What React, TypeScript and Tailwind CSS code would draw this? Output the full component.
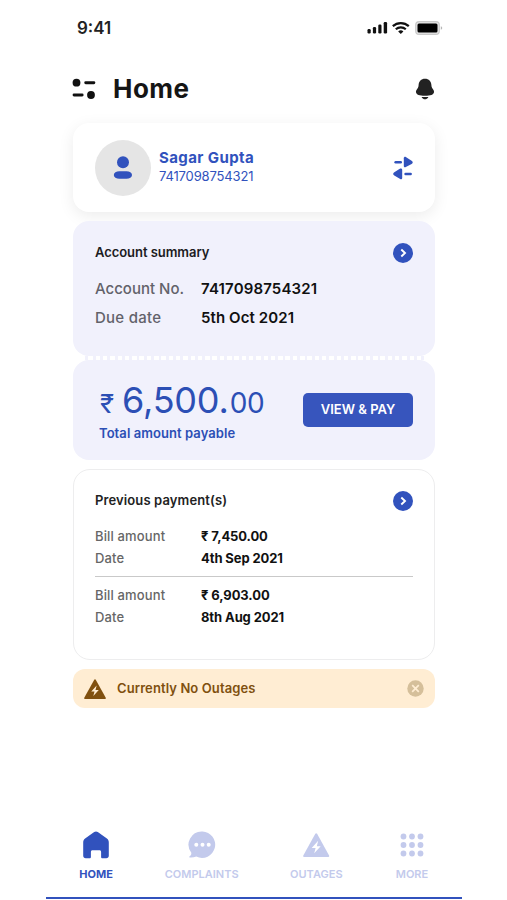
import type { ReactNode } from "react";

const NAV_COLOR = "#c3caec";

/* ---------- icons ---------- */

function StatusIcons() {
  return (
    <svg width="76" height="14" viewBox="0 0 76 14">
      {/* signal */}
      <rect x="0.5" y="8" width="3.2" height="4.4" rx="1.2" fill="#111" />
      <rect x="5.9" y="6" width="3.2" height="6.4" rx="1.2" fill="#111" />
      <rect x="11.3" y="3.5" width="3.2" height="8.9" rx="1.2" fill="#111" />
      <rect x="16.7" y="1" width="3.4" height="11.4" rx="1.2" fill="#111" />
      {/* wifi */}
      <g fill="none" stroke="#111" strokeWidth="2.2">
        <path d="M25.8 5.1a12 12 0 0 1 16 0" />
        <path d="M28.8 8.3a7.5 7.5 0 0 1 10 0" />
      </g>
      <path d="M31.2 10.4a4 4 0 0 1 5.2 0L33.8 13z" fill="#111" />
      {/* battery */}
      <rect x="48.7" y="0.7" width="23.6" height="12.6" rx="3.4" fill="#e4e4e4" stroke="#c9c9c9" strokeWidth="1.2" />
      <rect x="50.5" y="2.6" width="20" height="8.8" rx="1.5" fill="#000" />
      <path d="M73.8 5.2v3.6c.9-.3 1.4-1 1.4-1.8s-.5-1.5-1.4-1.8z" fill="#b5b5b5" />
    </svg>
  );
}

function MenuIcon() {
  return (
    <svg width="24" height="22" viewBox="0 0 24 22" fill="#111">
      <circle cx="4.5" cy="4.7" r="3.9" />
      <rect x="12.3" y="3.2" width="11" height="3" rx="1.4" />
      <rect x="0.6" y="15.5" width="11" height="3" rx="1.4" />
      <circle cx="19" cy="17" r="3.9" />
    </svg>
  );
}

function BellIcon() {
  return (
    <svg width="20" height="22" viewBox="0 0 20 22" fill="#222">
      <path d="M10 .8c-3.9 0-6.2 2.7-6.4 6.2-.1 1.7-.4 2.5-1.3 3.8C1.4 12.1.8 13 1 14.2c.3 2.4 3.4 3.5 9 3.5s8.7-1.1 9-3.5c.2-1.2-.4-2.1-1.300-3.4-.9-1.3-1.2-2.1-1.3-3.8C16.2 3.5 13.9.8 10 .8z" />
      <path d="M7.2 18.9h5.6c.5 0 .6.5.3.9-.7.9-1.7 1.5-3.1 1.5s-2.4-.6-3.1-1.5c-.3-.4-.2-.9.3-.9z" />
    </svg>
  );
}

function UserIcon() {
  return (
    <svg width="20" height="24" viewBox="0 0 20 24" fill="#3152bd">
      <circle cx="10" cy="6.2" r="6" />
      <rect x="0.8" y="15.2" width="18.2" height="7.6" rx="5.5" ry="3.8" />
    </svg>
  );
}

function SwitchIcon() {
  return (
    <svg width="22" height="24" viewBox="0 0 22 24" fill="#3152bd">
      <rect x="2.4" y="5" width="7.6" height="2.5" rx="1.2" />
      <path d="M11.8 2.2c0-1.2 1-1.800 2-1.300l5.800 3.800c1.500 1 1.500 2.300 0 3.200L13.800 11c-1 .5-2 0-2-1.100z" />
      <path d="M10.200 13.900c0-1.200-1-1.800-2-1.300l-5.900 3.600c-1.500 1-1.500 2.300 0 3.200l5.900 3.600c1 .5 2 0 2-1.100z" />
      <rect x="12.300" y="16.700" width="7.600" height="2.5" rx="1.2" />
    </svg>
  );
}

function ArrowBadge() {
  return (
    <svg className="-mt-px shrink-0" width="20" height="20" viewBox="0 0 20 20">
      <circle cx="10" cy="10" r="10" fill="#3152bd" />
      <path d="M8.3 6.5 12 10l-3.7 3.5" fill="none" stroke="#fff" strokeWidth="1.9" />
    </svg>
  );
}

function OutageIcon({ size, fill, bolt }: { size: number; fill: string; bolt: string }) {
  return (
    <svg width={size * 1.1} height={size} viewBox="0 0 26.4 24">
      <path
        d="M12.3.8Q13.2-.4 14.1.8L26.1 22.6Q26.5 23.8 25.4 24H1Q-.1 23.8.3 22.6z"
        fill={fill}
      />
      <path d="M15.2 7.7 8.7 15h3.9l-1.4 5.3 6.500-7h-3.9z" fill={bolt} />
    </svg>
  );
}

function HomeIcon() {
  return (
    <svg width="26" height="28" viewBox="0 0 26 28" fill="#3152bd">
      <path d="M11.2 1.1c1.1-.8 2.500-.8 3.600 0l9.100 6.500c1.300 1 1.900 2.200 1.900 3.800v13.400c0 1.600-1 2.500-2.500 2.500h-3.800c-.9 0-1.400-.5-1.400-1.400v-4.700c0-1.300-.6-1.900-1.800-1.900H9.700c-1.200 0-1.800.6-1.800 1.900v4.700c0 .9-.5 1.400-1.400 1.400H2.700c-1.500 0-2.500-.9-2.500-2.500V11.400c0-1.600.6-2.800 1.900-3.800z" />
    </svg>
  );
}

function ChatIcon() {
  return (
    <svg width="28" height="28" viewBox="0 0 28 28">
      <path
        d="M14.5.5a13.2 13.2 0 1 1-6.200 25.1c-2.100.8-4.300 1.100-6.400.9-.7-.1-.8-.8-.3-1.2 1.300-.9 1.900-2.100 1.700-3.600A13.200 13.200 0 0 1 14.5.5z"
        fill={NAV_COLOR}
      />
      <g fill="#fff">
        <circle cx="8.3" cy="13.7" r="2" />
        <circle cx="14.5" cy="13.7" r="2" />
        <circle cx="20.7" cy="13.7" r="2" />
      </g>
    </svg>
  );
}

function GridIcon() {
  return (
    <svg width="24" height="24" viewBox="0 0 24 24" fill={NAV_COLOR}>
      {[3.5, 12, 20.5].map((cy) =>
        [3.5, 12, 20.5].map((cx) => <circle key={`${cx}-${cy}`} cx={cx} cy={cy} r="2.9" />)
      )}
    </svg>
  );
}

/* ---------- building blocks ---------- */

function PaymentRow({ label, value }: { label: string; value: string }) {
  return (
    <div className="flex h-[22px] items-center text-[13px]">
      <span className="w-[106px] font-medium tracking-[0.15px] text-[#666]">{label}</span>
      <span className="font-bold tracking-[-0.1px] text-[#111]">{value}</span>
    </div>
  );
}

function NavItem({ icon, label, className }: { icon: ReactNode; label: string; className: string }) {
  return (
    <button className={`flex flex-col items-center ${className}`}>
      <span className="flex h-7 items-center">{icon}</span>
      <span className="mt-[7px] text-[11px] leading-4 whitespace-nowrap">{label}</span>
    </button>
  );
}

export default function App() {
  return (
    <div className="h-[900px] w-[507px] overflow-hidden bg-white font-['Inter','Noto_Sans',sans-serif]">
      <div className="ml-[46px] flex h-[899px] w-[416px] flex-col border-b-2 border-[#3152bd]">
        {/* Status bar */}
        <div className="flex h-14 items-center justify-between pr-[19px] pl-[31px]">
          <span className="pt-px text-[17px] font-semibold text-[#222]">9:41</span>
          <StatusIcons />
        </div>

        {/* Title */}
        <header className="flex h-[67px] items-center pr-[27px] pb-px pl-[26px]">
          <MenuIcon />
          <h1 className="-mt-px ml-[17px] text-[26px] font-bold tracking-[0.5px] text-[#151515]">Home</h1>
          <div className="ml-auto">
            <BellIcon />
          </div>
        </header>

        <main className="flex flex-col px-[27px]">
          {/* Profile */}
          <section className="flex h-[89px] items-center rounded-2xl bg-white px-[22px] shadow-[0_4px_16px_rgba(0,0,0,0.08)]">
            <div className="flex size-14 items-center justify-center rounded-full bg-[#e5e5e5]">
              <UserIcon />
            </div>
            <div className="ml-2 pb-0.5 text-[#3152bd]">
              <p className="text-[15px] leading-[19px] font-bold tracking-[0.4px]">Sagar Gupta</p>
              <p className="text-[13px] leading-[18px] tracking-[-0.15px]">7417098754321</p>
            </div>
            <div className="ml-auto -mr-px">
              <SwitchIcon />
            </div>
          </section>

          {/* Account summary */}
          <section className="mt-[9px] h-[135px] rounded-2xl bg-[#f1f1fc] px-[22px] pt-[22px]">
            <div className="flex h-5 items-center justify-between">
              <h2 className="text-[13px] font-semibold tracking-[-0.05px] text-[#1c1c22]">Account summary</h2>
              <ArrowBadge />
            </div>
            <div className="mt-3 flex h-[29px] items-center text-[15px]">
              <span className="w-[106px] font-medium text-[#62626a]">Account No.</span>
              <span className="font-semibold tracking-[0.15px] text-[#111]">7417098754321</span>
            </div>
            <div className="flex h-[29px] items-center text-[15px]">
              <span className="w-[106px] font-medium tracking-[0.25px] text-[#62626a]">Due date</span>
              <span className="font-semibold tracking-[0.1px] text-[#111]">5th Oct 2021</span>
            </div>
          </section>

          {/* Perforated edge */}
          <div className="mx-2 h-1 bg-[repeating-linear-gradient(90deg,#fff_0_4.5px,#f1f1fc_4.5px_7.3px)]" />

          {/* Amount payable */}
          <section className="flex h-[100px] items-center justify-between rounded-2xl bg-[#f1f1fc] pr-[22px] pl-[26px]">
            <div className="text-[#2c4fb5]">
              <p className="-mt-px flex h-[47px] items-baseline leading-[46px]">
                <span className="ml-px text-[26px]">₹</span>
                <span className="ml-2 text-[36px] tracking-[-0.2px]">6,500.</span>
                <span className="ml-px text-[28px] tracking-[-0.2px]">00</span>
              </p>
              <p className="text-[13px] leading-[18px] font-semibold tracking-[0.07px]">Total amount payable</p>
            </div>
            <button className="h-[34px] w-[110px] rounded-[5px] bg-[#3755bd] text-[13px] font-semibold text-white">
              VIEW &amp; PAY
            </button>
          </section>

          {/* Previous payments */}
          <section className="mt-[9px] h-[191px] rounded-[17px] border-[1.5px] border-[#ededee] bg-white px-[21px] pt-[21px]">
            <div className="flex h-5 items-center justify-between">
              <h2 className="text-[13px] font-semibold tracking-[0.12px] text-[#222]">Previous payment(s)</h2>
              <ArrowBadge />
            </div>
            <div className="mt-[15px] border-b-[1.5px] border-[#c9c9c9] pb-[6px]">
              <PaymentRow label="Bill amount" value="₹ 7,450.00" />
              <PaymentRow label="Date" value="4th Sep 2021" />
            </div>
            <div className="pt-[8px]">
              <PaymentRow label="Bill amount" value="₹ 6,903.00" />
              <PaymentRow label="Date" value="8th Aug 2021" />
            </div>
          </section>

          {/* Outage notice */}
          <section className="mt-[9px] flex h-[39px] items-center rounded-xl bg-[#ffedd3] px-[11px]">
            <OutageIcon size={20} fill="#80500f" bolt="#ffedd3" />
            <p className="ml-[11px] text-[13px] font-semibold tracking-[0.1px] text-[#80500f]">Currently No Outages</p>
            <svg className="ml-auto" width="17" height="17" viewBox="0 0 17 17">
              <circle cx="8.5" cy="8.5" r="8.2" fill="#d5bf9a" />
              <path d="m5.2 5.2 6.6 6.6m0-6.6-6.6 6.6" stroke="#ffedd3" strokeWidth="1.7" />
            </svg>
          </section>
        </main>

        {/* Tabs */}
        <nav className="mt-auto flex h-[66px] justify-between px-8">
          <NavItem icon={<HomeIcon />} label="HOME" className="w-9 font-bold text-[#3152bd]" />
          <NavItem icon={<ChatIcon />} label="COMPLAINTS" className="w-[74px] font-semibold text-[#c3caec]" />
          <NavItem
            icon={<OutageIcon size={24} fill={NAV_COLOR} bolt="#fff" />}
            label="OUTAGES"
            className="w-[54px] font-semibold text-[#c3caec]"
          />
          <NavItem icon={<GridIcon />} label="MORE" className="w-9 font-semibold text-[#c3caec]" />
        </nav>
      </div>
    </div>
  );
}
